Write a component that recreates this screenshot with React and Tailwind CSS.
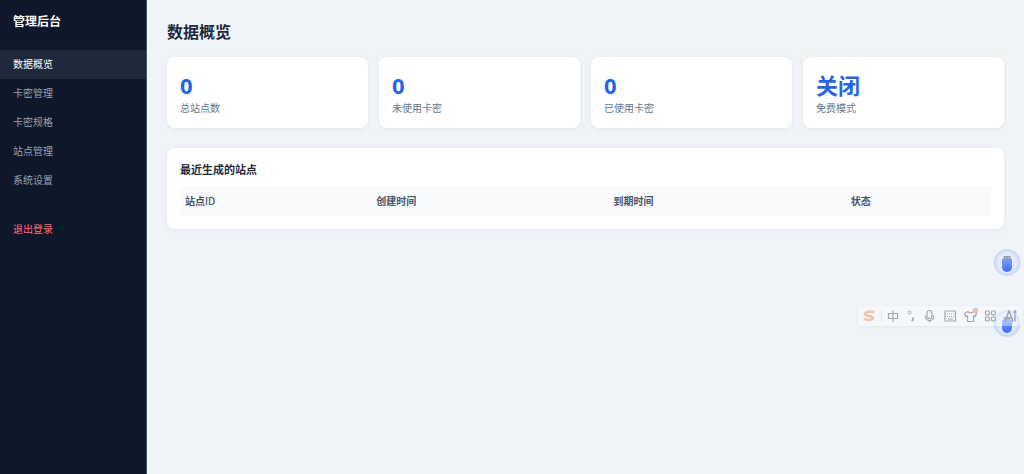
const menuItems = ['数据概览', '卡密管理', '卡密规格', '站点管理', '系统设置'];

const stats = [
  { value: '0', label: '总站点数' },
  { value: '0', label: '未使用卡密' },
  { value: '0', label: '已使用卡密' },
  { value: '关闭', label: '免费模式' },
];

const columns = [
  { name: '站点ID', width: 'w-[191px]' },
  { name: '创建时间', width: 'w-[237px]' },
  { name: '到期时间', width: 'w-[237px]' },
  { name: '状态', width: 'w-[145px]' },
];

const Sidebar = () => (
  <aside className="w-[147px] shrink-0 border-r border-[#475569] bg-[#0f172a]">
    <div className="border-b border-[#141c30] px-[13px] pt-3 pb-3 text-xs leading-[20px] font-bold text-white">
      管理后台
    </div>
    <nav className="flex flex-col pt-[5px] text-[10px]">
      {menuItems.map((item, index) => (
        <a
          key={item}
          href="#"
          className={
            index === 0
              ? 'bg-[#1e293b] px-[13px] leading-[29px] text-white'
              : 'px-[13px] leading-[29px] text-[#94a3b8]'
          }
        >
          {item}
        </a>
      ))}
      <a href="#" className="mt-5 px-[13px] leading-[29px] text-[#f87171]">
        退出登录
      </a>
    </nav>
  </aside>
);

const StatCard = ({ value, label }) => (
  <div className="rounded-lg bg-white px-[13px] pt-3 pb-3 shadow-[0_1px_5px_rgba(15,23,42,0.06)]">
    <div className="text-[22px] leading-[32px] font-bold text-[#2563eb]">{value}</div>
    <div className="text-[10px] leading-[15px] text-[#64748b]">{label}</div>
  </div>
);

const RecentSites = () => (
  <section className="mt-5 rounded-lg bg-white p-[13px] shadow-[0_1px_5px_rgba(15,23,42,0.06)]">
    <h2 className="mb-2 text-[11px] leading-[17px] font-bold text-[#1e293b]">最近生成的站点</h2>
    <table className="w-full table-fixed text-left text-[10px]">
      <thead>
        <tr className="bg-[#f8fafc] text-[#475569]">
          {columns.map((col) => (
            <th key={col.name} className={`${col.width} px-[5px] leading-[30px] font-semibold`}>
              {col.name}
            </th>
          ))}
        </tr>
      </thead>
    </table>
  </section>
);

// Round floating button with a USB stick
const UsbButton = () => (
  <button type="button" aria-label="USB" className="block size-7">
    <svg viewBox="0 0 28 28" className="size-7">
      <defs>
        <linearGradient id="usb-body" x1="0" y1="0" x2="0" y2="1">
          <stop offset="0" stopColor="#7ba0ff" />
          <stop offset="1" stopColor="#3d6bfa" />
        </linearGradient>
        <radialGradient id="usb-ring">
          <stop offset="0.6" stopColor="#e6edfd" />
          <stop offset="0.85" stopColor="#d8e2fc" />
          <stop offset="1" stopColor="#c3d1fb" />
        </radialGradient>
      </defs>
      <circle cx="14" cy="14.5" r="13" fill="url(#usb-ring)" stroke="#ccd8fa" />
      <rect x="10.5" y="8" width="7" height="4" fill="#9498a3" />
      <path d="M12 9.5h1.5M14.8 9.5h1.5" stroke="#c8cbd3" />
      <path d="M9 11h10v8a5 5 0 0 1-10 0z" fill="url(#usb-body)" />
    </svg>
  </button>
);

// Input method bar
const ImeBar = () => (
  <div className="rounded-sm bg-white/35 shadow-[0_1px_3px_rgba(15,23,42,0.06)]">
    <svg viewBox="0 0 164 20" className="h-5 w-[164px]" fill="none" stroke="#a2a8ae" strokeWidth="1.2">
      <path
        d="M16.5 6.3C13 5 7 5.6 7 8.1c0 2.5 8 1.4 8 3.8 0 2.2-5.5 2.7-9 1"
        stroke="#f5c3a6"
        strokeWidth="2.5"
      />
      <path d="M23.5 4v12" stroke="#e2e7eb" strokeWidth="1" />
      <path d="M30.5 7.5h9v5h-9zM35 4.5v11.5" />
      <circle cx="51.5" cy="6.5" r="1.5" strokeWidth="1" />
      <path d="M55 11.5v1.5q0 1.5-1.5 2" strokeWidth="1.8" />
      <rect x="69" y="4.5" width="5" height="8" rx="2.5" />
      <path d="M67.2 9.5c0 6.8 8.6 6.8 8.6 0M71.5 14.5v2" />
      <rect x="87" y="5" width="10.5" height="10" rx="0.6" />
      <path d="M89 8h7M89 10.5h7" strokeWidth="1" strokeDasharray="1 1" />
      <path d="M90 13h5" strokeWidth="1" />
      <path d="M110 5.5l-3.5 2 1.2 3 1.8-.6V15.5h6v-5.6l1.8.6 1.2-3-3.5-2c-.8 2-4.2 2-5 0z" />
      <circle cx="117.5" cy="4.5" r="2.8" fill="#f8bbb2" stroke="none" />
      <rect x="127.5" y="5" width="3.8" height="3.8" rx="0.8" />
      <rect x="133.5" y="5" width="3.8" height="3.8" rx="0.8" />
      <rect x="127.5" y="11" width="3.8" height="3.8" rx="0.8" />
      <rect x="133.5" y="11" width="3.8" height="3.8" rx="0.8" />
      <path d="M147 15.5l4-10.5 4 10.5M148.5 12h5M157 8.5v7M157 4v4M155 6h4" stroke="#8f98a8" />
    </svg>
  </div>
);

const App = () => {
  return (
    <div className="flex min-h-screen bg-[#f0f4f9] font-['Open_Sans','Noto_Sans_CJK_SC',sans-serif]">
      <Sidebar />
      <main className="min-w-0 flex-1 p-5">
        <h1 className="mb-[13px] text-base leading-[24px] font-bold text-[#1e293b]">数据概览</h1>
        <div className="grid grid-cols-4 gap-[11px]">
          {stats.map((stat) => (
            <StatCard key={stat.label} value={stat.value} label={stat.label} />
          ))}
        </div>
        <RecentSites />
      </main>

      {/* Floating widgets */}
      <div className="fixed top-[248px] right-[3px]">
        <UsbButton />
      </div>
      <div className="fixed top-[309px] right-[3px]">
        <UsbButton />
      </div>
      <div className="fixed top-[306px] right-0.5">
        <ImeBar />
      </div>
    </div>
  );
};

export default App;
